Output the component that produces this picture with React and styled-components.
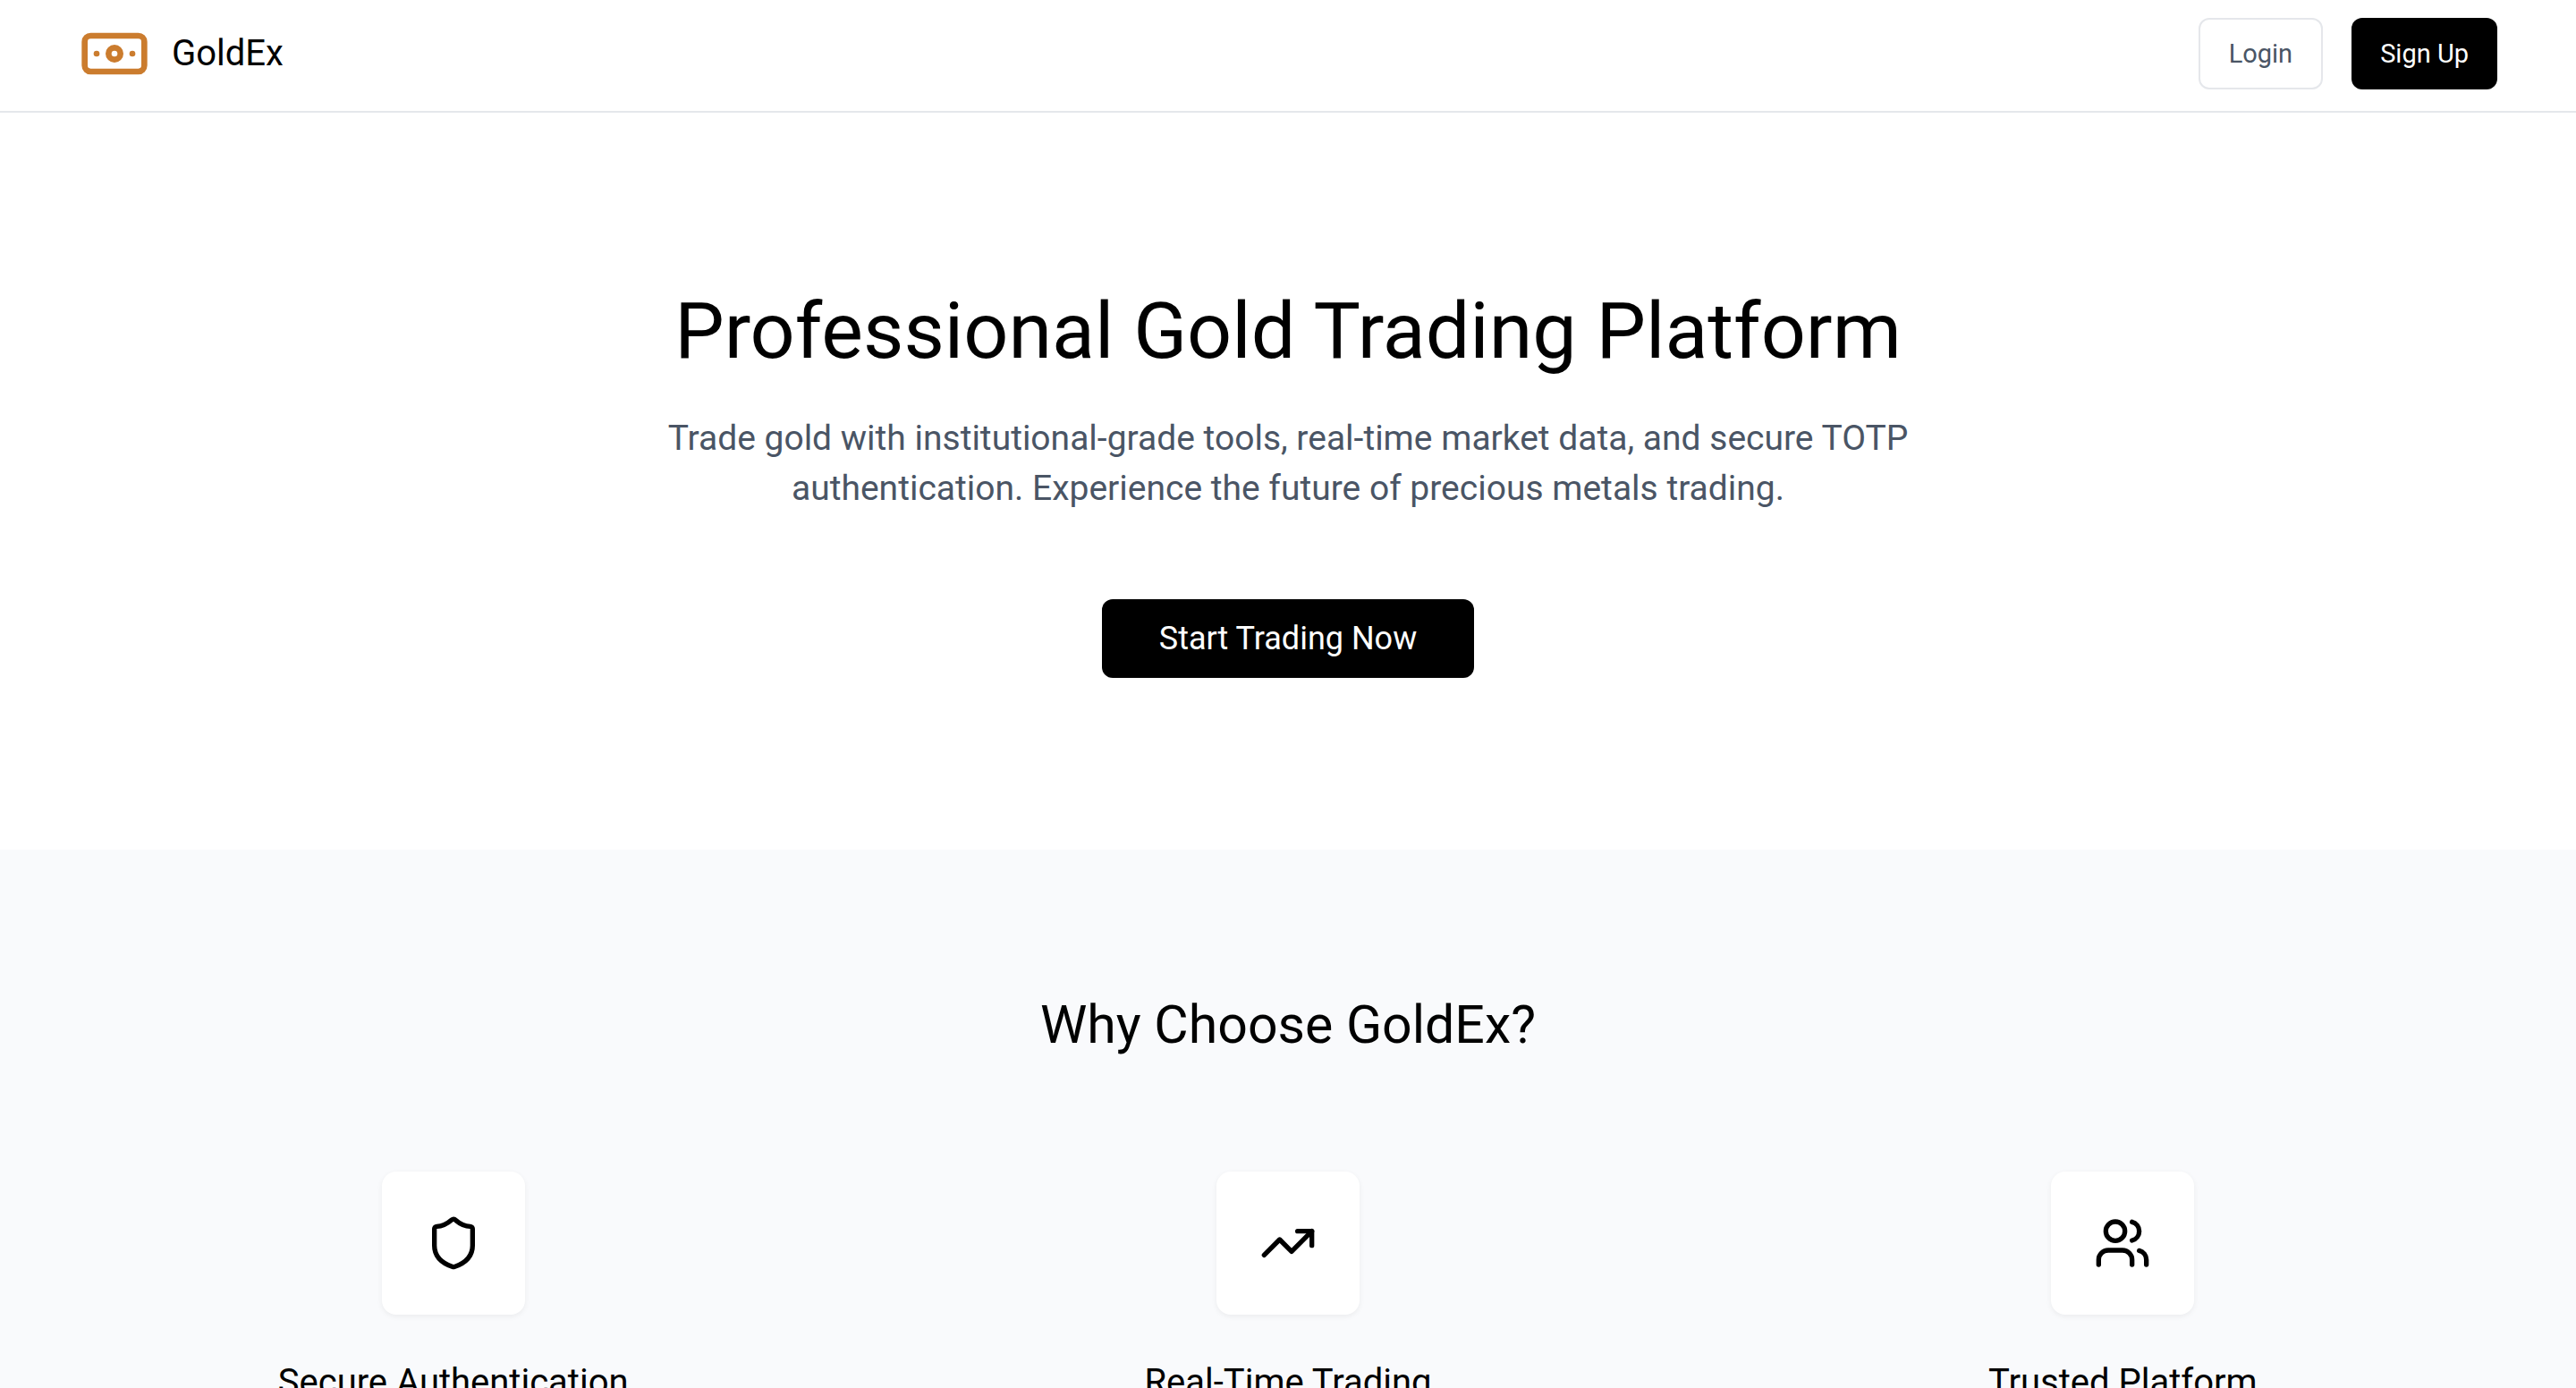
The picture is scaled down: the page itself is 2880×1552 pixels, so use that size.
import React from "react";
import styled, { createGlobalStyle } from "styled-components";
import { Banknote, Shield, TrendingUp, Users } from "lucide-react";

const GlobalStyle = createGlobalStyle`
  *, *::before, *::after { box-sizing: border-box; }
  body {
    margin: 0;
    background: #ffffff;
    color: #000000;
    font-family: Roboto, "Liberation Sans", sans-serif;
    -webkit-font-smoothing: antialiased;
  }
  h1, h2, h3, p { margin: 0; font-weight: 400; }
`;

const Page = styled.div`
  display: flex;
  flex-direction: column;
  height: 100vh;
  overflow: hidden;
`;

const Header = styled.header`
  display: flex;
  flex-shrink: 0;
  align-items: center;
  justify-content: space-between;
  padding: 20px 88px 24px;
  border-bottom: 2px solid #e5e7eb;
`;

const Brand = styled.a`
  display: flex;
  align-items: center;
  gap: 24px;
  color: inherit;
  font-size: 40px;
  line-height: 56px;
  text-decoration: none;

  svg { color: #cb7c2e; }
`;

const Nav = styled.nav`
  display: flex;
  gap: 32px;
`;

const Button = styled.button`
  display: inline-flex;
  align-items: center;
  justify-content: center;
  height: ${({ $large }) => ($large ? "88px" : "80px")};
  padding: 0 ${({ $large }) => ($large ? "64px" : "32px")};
  border: ${({ $outline }) => ($outline ? "2px solid #e5e7eb" : "none")};
  border-radius: 12px;
  background: ${({ $outline }) => ($outline ? "#ffffff" : "#000000")};
  color: ${({ $outline }) => ($outline ? "#4a5565" : "#ffffff")};
  font-family: inherit;
  font-size: ${({ $large }) => ($large ? "36px" : "29px")};
  line-height: 40px;
  cursor: pointer;
`;

const Hero = styled.section`
  display: flex;
  flex-direction: column;
  flex-shrink: 0;
  align-items: center;
  padding: 192px 88px;
  text-align: center;
`;

const HeroTitle = styled.h1`
  font-size: 88px;
  line-height: 104px;
`;

const HeroText = styled.p`
  max-width: 1440px;
  margin: 40px 0 96px;
  color: #4a5565;
  font-size: 39px;
  line-height: 56px;
`;

const Features = styled.section`
  flex: 1 0 auto;
  padding: 160px 88px;
  background: #f9fafc;
  text-align: center;
`;

const SectionTitle = styled.h2`
  font-size: 59px;
  line-height: 72px;
`;

const FeatureGrid = styled.div`
  display: grid;
  grid-template-columns: repeat(3, 1fr);
  gap: 96px;
  margin-top: 128px;
`;

const Feature = styled.article`
  display: flex;
  flex-direction: column;
  align-items: center;
  gap: 48px;
`;

const IconTile = styled.div`
  display: grid;
  place-items: center;
  width: 160px;
  height: 160px;
  border-radius: 16px;
  background: #ffffff;
  box-shadow: 0 2px 6px rgba(0, 0, 0, 0.06);
`;

const FeatureTitle = styled.h3`
  font-size: 40px;
  line-height: 56px;
`;

const features = [
  { title: "Secure Authentication", icon: Shield },
  { title: "Real-Time Trading", icon: TrendingUp },
  { title: "Trusted Platform", icon: Users },
];

export default function App() {
  return (
    <Page>
      <GlobalStyle />
      <Header>
        <Brand href="#">
          <Banknote size={80} aria-hidden="true" />
          GoldEx
        </Brand>
        <Nav>
          <Button type="button" $outline>Login</Button>
          <Button type="button">Sign Up</Button>
        </Nav>
      </Header>
      <Hero>
        <HeroTitle>Professional Gold Trading Platform</HeroTitle>
        <HeroText>
          Trade gold with institutional-grade tools, real-time market data, and
          secure TOTP authentication. Experience the future of precious metals
          trading.
        </HeroText>
        <Button type="button" $large>Start Trading Now</Button>
      </Hero>
      <Features>
        <SectionTitle>Why Choose GoldEx?</SectionTitle>
        <FeatureGrid>
          {features.map(({ title, icon: Icon }) => (
            <Feature key={title}>
              <IconTile>
                <Icon size={64} aria-hidden="true" />
              </IconTile>
              <FeatureTitle>{title}</FeatureTitle>
            </Feature>
          ))}
        </FeatureGrid>
      </Features>
    </Page>
  );
}
